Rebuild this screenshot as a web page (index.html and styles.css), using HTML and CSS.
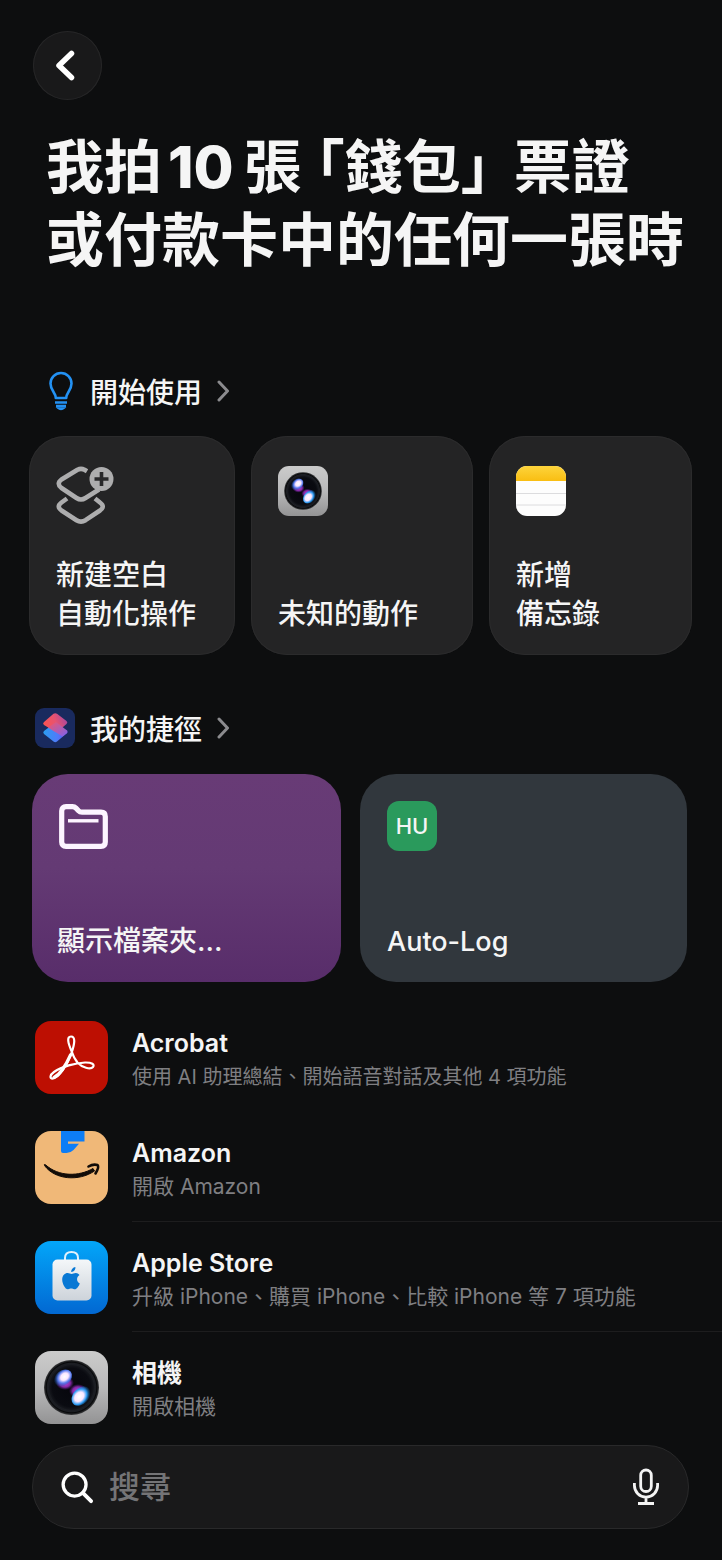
FILE: index.html
```html
<!DOCTYPE html>
<html lang="zh-Hant-TW">
<head>
<meta charset="utf-8">
<meta name="viewport" content="width=device-width, initial-scale=1">
<title>捷徑</title>
<link rel="stylesheet" href="styles.css">
</head>
<body>
<svg class="defs" width="0" height="0" aria-hidden="true">
  <defs>
    <linearGradient id="cam-body" x1="0" y1="0" x2="0" y2="1"><stop offset="0" stop-color="#cbcbcb"/><stop offset=".5" stop-color="#b9b9ba"/><stop offset="1" stop-color="#939394"/></linearGradient>
    <radialGradient id="cam-lens" cx=".5" cy=".5" r=".5"><stop offset="0" stop-color="#06060c"/><stop offset=".7" stop-color="#0a0b11"/><stop offset=".88" stop-color="#1c1e23"/><stop offset=".92" stop-color="#07080a"/><stop offset="1" stop-color="#3c3d3f"/></radialGradient>
    <radialGradient id="flare-a" cx=".6" cy=".5" r=".6"><stop offset="0" stop-color="#fff"/><stop offset=".35" stop-color="#fbe6ff"/><stop offset=".62" stop-color="#5a7cf0"/><stop offset="1" stop-color="#0b4fa0" stop-opacity="0"/></radialGradient>
    <radialGradient id="flare-b" cx=".42" cy=".45" r=".6"><stop offset="0" stop-color="#fff"/><stop offset=".4" stop-color="#fbe6ff"/><stop offset=".66" stop-color="#2f9cf4"/><stop offset="1" stop-color="#0667b8" stop-opacity="0"/></radialGradient>
    <radialGradient id="flare-c"><stop offset="0" stop-color="#d044ea"/><stop offset=".6" stop-color="#a030c8" stop-opacity=".8"/><stop offset="1" stop-color="#6a1a9a" stop-opacity="0"/></radialGradient>
    <linearGradient id="store-bg" x1="0" y1="0" x2="0" y2="1"><stop offset="0" stop-color="#03a6f9"/><stop offset="1" stop-color="#0268d2"/></linearGradient>
    <linearGradient id="bag" x1="0" y1="0" x2="0" y2="1"><stop offset="0" stop-color="#f4f7f9"/><stop offset="1" stop-color="#cdd3da"/></linearGradient>
    <linearGradient id="memo" x1="0" y1="0" x2="0" y2="1"><stop offset="0" stop-color="#fdd43c"/><stop offset="1" stop-color="#f9be12"/></linearGradient>
    <linearGradient id="sc-top" x1="0" y1=".6" x2="1" y2=".3"><stop offset="0" stop-color="#fb5350"/><stop offset=".5" stop-color="#e8536f"/><stop offset="1" stop-color="#a8479f"/></linearGradient>
    <linearGradient id="sc-bot" x1="0" y1=".4" x2="1" y2=".5"><stop offset="0" stop-color="#2a9df0"/><stop offset=".6" stop-color="#4d7cfa"/><stop offset="1" stop-color="#6a54f0"/></linearGradient>
    <linearGradient id="sc-mid" x1="0" y1="0" x2="1" y2="1"><stop offset="0" stop-color="#f0566a"/><stop offset="1" stop-color="#7d62ee"/></linearGradient>
    <symbol id="camera" viewBox="0 0 73 73">
      <rect width="73" height="73" rx="16" fill="url(#cam-body)"/>
      <circle cx="36.500" cy="36.500" r="27.500" fill="url(#cam-lens)"/>
      <circle cx="36.500" cy="36.500" r="23" fill="none" stroke="#1c1e24" stroke-width="1"/>
      <ellipse cx="30" cy="32" rx="9" ry="7" fill="url(#flare-c)"/>
      <ellipse cx="43" cy="40" rx="9" ry="7" fill="url(#flare-c)"/>
      <ellipse cx="28" cy="27" rx="10" ry="7.500" transform="rotate(-40 28 27)" fill="url(#flare-a)"/>
      <ellipse cx="46" cy="45" rx="11" ry="8" transform="rotate(-48 46 45)" fill="url(#flare-b)"/>
    </symbol>
  </defs>
</svg>

<header class="top">
  <button class="back" type="button" aria-label="返回">
    <svg viewBox="0 0 69 69" aria-hidden="true"><path d="M38.500 22.500 26 34.500 38.500 46.500" fill="none" stroke="#fff" stroke-width="5.500" stroke-linecap="round" stroke-linejoin="round"/></svg>
  </button>
  <h1 class="title">我拍<span class="count">10</span>張<span class="open">「</span>錢包<span class="close">」</span>票證<br>或付款卡中的任何一張時</h1>
</header>

<main>
  <section class="group">
    <h2 class="heading">
      <a href="#start">
        <svg class="heading-icon" viewBox="0 0 40 40" aria-hidden="true" fill="none" stroke="#2391f3" stroke-width="2.600">
          <path d="M20.800 27C20.800 21.500 15.500 19.500 15.500 12.500A10.500 10.500 0 0 1 36.500 12.500C36.500 19.500 31.200 21.500 31.200 27Z" stroke-linejoin="round"/>
          <path d="M20 31.500H32M21 35H31" stroke-width="2.400"/>
          <path d="M22.500 37H29.500Q26 40 22.500 37Z" fill="#2391f3" stroke-width="1.400"/>
        </svg>
        <span class="heading-text">開始使用</span>
        <svg class="chevron" viewBox="0 0 13 22" aria-hidden="true"><path d="m2 2 8.500 9-8.500 9" fill="none" stroke="#8b8b8e" stroke-width="3" stroke-linecap="round" stroke-linejoin="round"/></svg>
      </a>
    </h2>
    <div class="starters">
      <button class="card" type="button">
        <svg class="stack-icon" viewBox="0 0 60 60" aria-hidden="true">
          <g fill="none" stroke="#adadae" stroke-width="4.600" stroke-linejoin="round">
            <path d="M31 5.200 28.500 3.700Q25 2 21.500 3.700L5.500 13.500Q0 17.500 5.500 22L20.500 32Q25 35 29.500 32L43 23.500"/>
            <path d="M11 32.500 5.500 36.500Q0 40.500 5.500 44.500L20.500 54.200Q25 57 29.500 54.200L44 44.500Q49.500 40.500 44 36.500L39 32.500"/>
          </g>
          <circle cx="45.500" cy="13" r="12" fill="#adadae"/>
          <path d="M45.500 6V20M38.500 13H52.500" stroke="#28282a" stroke-width="3.600"/>
        </svg>
        <span class="label">新建空白<br>自動化操作</span>
      </button>
      <button class="card" type="button">
        <svg class="card-icon" aria-hidden="true"><use href="#camera"/></svg>
        <span class="label">未知的動作</span>
      </button>
      <button class="card" type="button">
        <svg class="card-icon" viewBox="0 0 50 50" aria-hidden="true">
          <rect width="50" height="50" rx="11" fill="#fdfdfd"/>
          <path d="M0 15V11A11 11 0 0 1 11 0H39A11 11 0 0 1 50 11V15Z" fill="url(#memo)"/>
          <path d="M0 27.500H50M0 39H50" stroke="#dcdcde" stroke-width="1"/>
        </svg>
        <span class="label">新增<br>備忘錄</span>
      </button>
    </div>
  </section>

  <section class="group mine">
    <h2 class="heading">
      <a href="#mine">
        <svg class="heading-icon" viewBox="0 0 40 40" aria-hidden="true">
          <rect width="40" height="40" rx="9" fill="#192a5e"/>
          <path d="M13 20 20 16 31.500 22.500Q33.500 24 31.500 25.500L22 33.500Q20.300 35 18.500 33.500L9 26Q7.500 24.500 9 23Z" fill="url(#sc-bot)"/>
          <path d="M18.500 5.800Q20.300 4.500 22 5.800L31.500 13Q33.200 14.500 31.500 16L28 19 20 23.500 9 17Q7.200 15.500 9 14Z" fill="url(#sc-top)"/>
          <path d="M21 14 32 22.500Q33.200 24 31.500 25.500L27.500 28.500 13 19.500Z" fill="url(#sc-mid)"/>
        </svg>
        <span class="heading-text">我的捷徑</span>
        <svg class="chevron" viewBox="0 0 13 22" aria-hidden="true"><path d="m2 2 8.500 9-8.500 9" fill="none" stroke="#8b8b8e" stroke-width="3" stroke-linecap="round" stroke-linejoin="round"/></svg>
      </a>
    </h2>
    <div class="shortcuts">
      <button class="card purple" type="button">
        <svg class="folder-icon" viewBox="0 0 52 50" aria-hidden="true" fill="none" stroke="#fdf5ff">
          <path d="M4.700 10Q4.700 5.700 9 5.700H15.500Q17.500 5.700 19 7.200L21.500 9.800Q22.800 11.200 25 11.200H44Q48.300 11.200 48.300 15.500V41Q48.300 45.300 44 45.300H9Q4.700 45.300 4.700 41Z" stroke-width="5.200"/>
          <path d="M11 19.800H41.500" stroke-width="3.400"/>
        </svg>
        <span class="label">顯示檔案夾…</span>
      </button>
      <button class="card slate" type="button">
        <span class="chip">HU</span>
        <span class="label">Auto-Log</span>
      </button>
    </div>
  </section>

  <ul class="apps">
    <li><a class="app" href="#acrobat">
      <svg class="app-icon" viewBox="0 0 73 73" aria-hidden="true">
        <rect width="73" height="73" rx="16" fill="#bd0f02"/>
        <path d="M36.500 30C33 22 31.500 15.500 36 15.500C40.500 15.500 40 22 36.500 32C32.500 43 24.500 56.500 18 57.500C14.500 58 14.500 54 19 51C27 45.500 40 42 50 41.500C57 41.300 60 43.500 58 46C55.500 49 47 46.500 42.500 41.500C39.500 38 38 34.500 36.500 30Z" fill="none" stroke="#fff" stroke-width="2.200" stroke-linejoin="round"/>
        <path d="M35.500 34C31.500 43 25 53.500 19 56.500" fill="none" stroke="#fff" stroke-width="3.200" stroke-linecap="round"/>
      </svg>
      <span class="app-text"><span class="app-name">Acrobat</span><span class="app-note long">使用 AI 助理總結、開始語音對話及其他 4 項功能</span></span>
    </a></li>
    <li><a class="app" href="#amazon">
      <svg class="app-icon" viewBox="0 0 73 73" aria-hidden="true">
        <rect width="73" height="73" rx="16" fill="#f0b878"/>
        <path d="M26 0H49.500V10.500H33V12.800H44L38.500 19Q35.500 22 31.500 22H28Q26 22 26 20Z" fill="#0d7df6"/>
        <path d="M9.500 34.500C20 49 44 50.500 59.500 40L58 37.500C44 45.500 24 46 10.500 33.800Q8.700 33 9.500 34.500Z" fill="#120c08" stroke="#120c08" stroke-width="1"/>
        <path d="M53.500 35.500Q58 32.800 62.500 34Q64.500 36 60.500 42.500" fill="none" stroke="#120c08" stroke-width="2.600" stroke-linecap="round" stroke-linejoin="round"/>
      </svg>
      <span class="app-text"><span class="app-name">Amazon</span><span class="app-note">開啟 Amazon</span></span>
    </a></li>
    <li><a class="app" href="#store">
      <svg class="app-icon" viewBox="0 0 73 73" aria-hidden="true">
        <rect width="73" height="73" rx="16" fill="url(#store-bg)"/>
        <path d="M30 19V17Q30 11 36.500 11Q43 11 43 17V19" fill="none" stroke="#dff0fb" stroke-width="2"/>
        <rect x="17.500" y="18.500" width="39" height="41" rx="5" fill="url(#bag)"/>
        <path d="M44.800 42.500C43.700 45.600 41.300 48.800 39.300 48.300C38 47.900 37.500 47.500 36.200 47.500C34.900 47.500 34.300 48 33.100 48.300C30.500 48.800 27.200 43 27.200 38.500C27.200 34.200 30 32 32.600 32C34.300 32 35.300 33 36.600 33C37.900 33 38.900 32 40.900 32C42.200 32 43.600 32.700 44.500 34C41 36 41.500 41 44.800 42.500Z" fill="#0878d4"/>
        <path d="M36.200 31C36 28.500 37.900 26.300 40.400 26C40.700 28.500 38.700 30.900 36.200 31Z" fill="#0878d4"/>
      </svg>
      <span class="app-text"><span class="app-name">Apple Store</span><span class="app-note">升級 iPhone、購買 iPhone、比較 iPhone 等 7 項功能</span></span>
    </a></li>
    <li><a class="app" href="#camera-app">
      <svg class="app-icon" aria-hidden="true"><use href="#camera"/></svg>
      <span class="app-text"><span class="app-name">相機</span><span class="app-note">開啟相機</span></span>
    </a></li>
  </ul>
</main>

<form class="search" role="search">
  <svg class="search-icon" viewBox="0 0 34 34" aria-hidden="true"><circle cx="14" cy="14" r="11.800" fill="none" stroke="#fff" stroke-width="3.400"/><path d="m22.500 22.500 8.500 8.500" stroke="#fff" stroke-width="4" stroke-linecap="round"/></svg>
  <input type="search" placeholder="搜尋" aria-label="搜尋">
  <button class="mic" type="button" aria-label="語音輸入">
    <svg viewBox="0 0 28 38" aria-hidden="true" fill="none" stroke="#f4f4f4" stroke-width="2.800"><rect x="8.700" y="2" width="10.600" height="21.500" rx="5.300"/><path d="M2.400 15V17.500A11.600 11.600 0 0 0 25.600 17.500V15M14 29V35.500M6 35.500H22"/></svg>
  </button>
</form>
</body>
</html>
```

FILE: styles.css
```css
* {
  box-sizing: border-box;
}

body {
  margin: 0;
  padding: 31px 0;
  background: #0d0e0f;
  color: #f5f5f5;
  font-family: Inter, "Noto Sans CJK TC", sans-serif;
  font-weight: 500;
}

button,
input {
  font: inherit;
  color: inherit;
}

button {
  border: 0;
  padding: 0;
  background: none;
}

a {
  color: inherit;
  text-decoration: none;
}

.defs {
  position: absolute;
}

.back {
  display: block;
  width: 69px;
  height: 69px;
  margin-left: 33px;
  border-radius: 50%;
  background: #19191a;
  box-shadow: inset 0 0 0 1px #262627;
}

.back svg {
  display: block;
}

.title {
  margin: 31px 0 0;
  padding-left: 46px;
  font-size: 58px;
  line-height: 73px;
  font-weight: 700;
  white-space: nowrap;
}

.count {
  margin: 0 10px 0 6px;
  font-weight: 800;
}

.open,
.close {
  font-feature-settings: "halt";
}

.open {
  margin-left: 14px;
}

.close {
  margin-right: 24px;
}

.group {
  margin-top: 94px;
}

.mine {
  margin-top: 53px;
}

.heading {
  margin: 0;
  padding-left: 35px;
  font-size: 28px;
  line-height: 40px;
  font-weight: 500;
}

.heading a {
  display: flex;
  align-items: center;
  gap: 15px;
  width: fit-content;
  height: 40px;
}

.heading-text {
  padding-top: 3px;
}

.heading-icon {
  width: 40px;
  height: 40px;
}

.chevron {
  width: 13px;
  height: 22px;
}

.starters,
.shortcuts {
  display: grid;
}

.starters {
  grid-template-columns: 206fr 222fr 203fr;
  gap: 16px;
  margin-top: 25px;
  padding: 0 30px 0 29px;
}

.shortcuts {
  grid-template-columns: 309fr 327fr;
  gap: 19px;
  margin-top: 26px;
  padding: 0 35px 0 32px;
}

.card {
  display: flex;
  flex-direction: column;
  align-items: flex-start;
  justify-content: space-between;
  min-height: 219px;
  padding: 30px 27px 21px;
  border-radius: 36px;
  background: #242425;
  box-shadow: inset 0 0 0 1px #2b2b2c;
  text-align: left;
}

.shortcuts .card {
  min-height: 208px;
  padding: 27px 25px 21px;
}

.card.purple {
  background: linear-gradient(#683b76, #643a74 45%, #582d6a);
  box-shadow: none;
}

.shortcuts .slate {
  padding-left: 27px;
  background: #31373d;
  box-shadow: none;
}

.card-icon {
  width: 50px;
  height: 50px;
}

.stack-icon {
  width: 60px;
  height: 60px;
}

.folder-icon {
  width: 52px;
  height: 50px;
}

.chip {
  display: grid;
  place-items: center;
  width: 50px;
  height: 50px;
  border-radius: 12px;
  background: #2a9a5c;
  font-size: 22px;
}

.label {
  font-size: 28px;
  line-height: 39px;
  font-weight: 500;
}

.slate .label {
  font-size: 27px;
}

.apps {
  margin: 20px 0 0;
  padding: 0 0 0 35px;
  list-style: none;
}

.app {
  display: flex;
  align-items: center;
  gap: 24px;
}

.app-icon {
  flex: none;
  width: 73px;
  height: 73px;
}

.app-text {
  flex: 1;
  display: flex;
  flex-direction: column;
  justify-content: center;
  min-height: 110px;
  padding-top: 6px;
  border-bottom: 1px solid #1d1d1e;
}

.apps li:first-child .app-text,
.apps li:last-child .app-text {
  border-color: transparent;
}

.app-name {
  font-size: 25px;
  line-height: 35px;
  font-weight: 600;
}

.app-note {
  color: #7f7f82;
  font-size: 21px;
  line-height: 32px;
  font-weight: 400;
}

.app-note.long {
  font-size: 20px;
}

.search {
  display: flex;
  align-items: center;
  gap: 15px;
  min-height: 84px;
  margin: 3px 33px 0 32px;
  padding: 0 28px;
  border: 1px solid #29292a;
  border-radius: 42px;
  background: #19191a;
}

.search-icon {
  flex: none;
  width: 33px;
  height: 33px;
}

.search input {
  flex: 1;
  min-width: 0;
  padding: 0;
  border: 0;
  outline: 0;
  background: none;
  font-size: 31px;
  line-height: 40px;
}

.search input::placeholder {
  color: #747476;
  opacity: 1;
}

.mic svg {
  display: block;
  width: 28px;
  height: 38px;
}
```
